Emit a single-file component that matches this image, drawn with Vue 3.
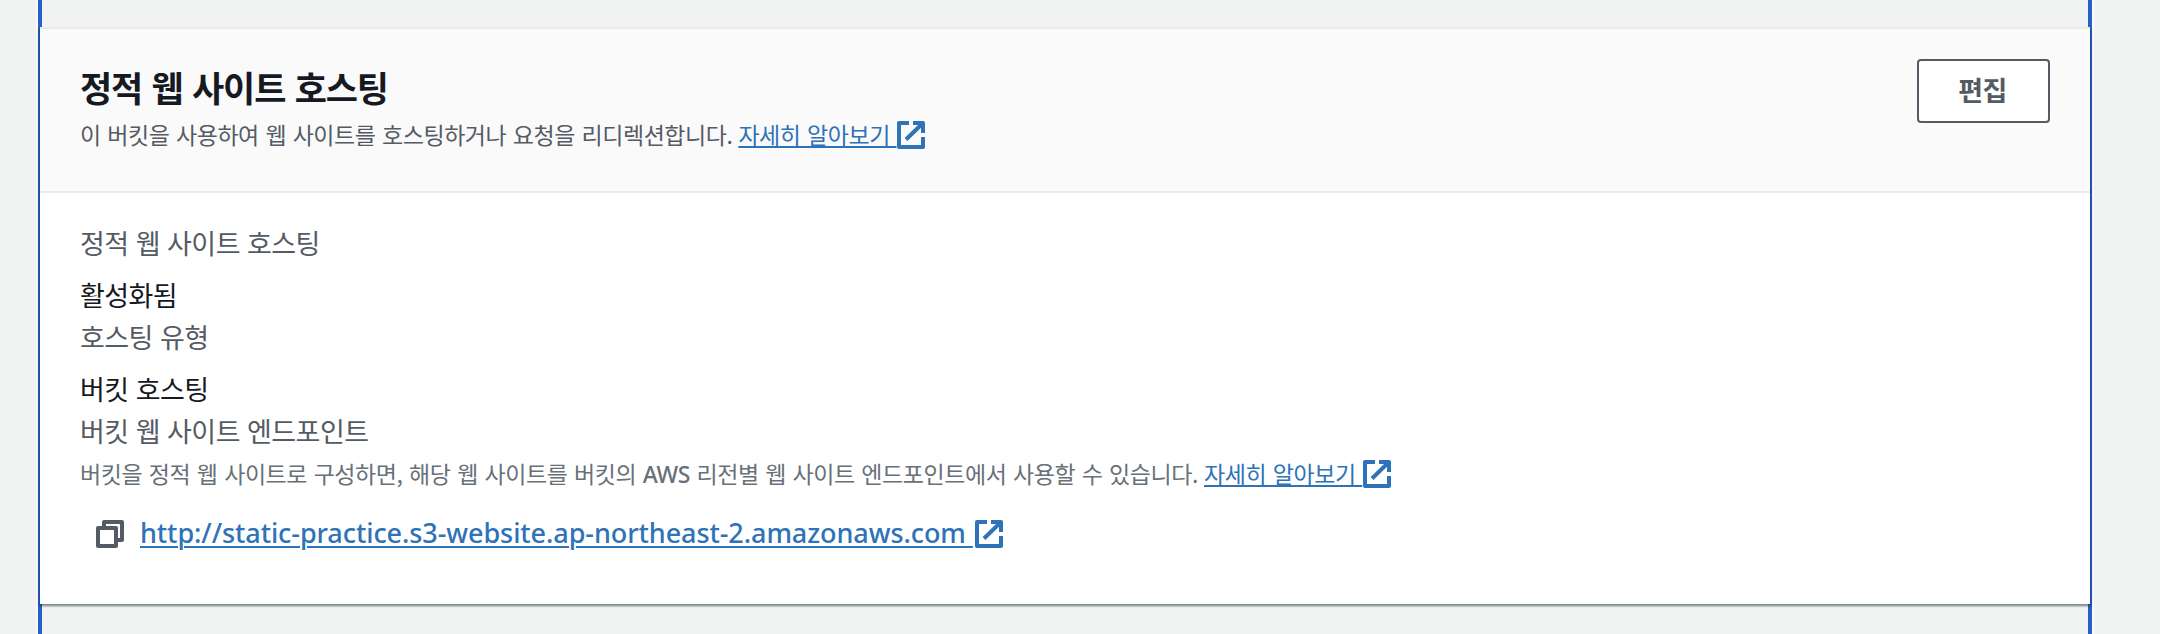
<script setup>
import { h } from 'vue'

const fields = [
  { label: '정적 웹 사이트 호스팅', value: '활성화됨' },
  { label: '호스팅 유형', value: '버킷 호스팅' },
]

const ExternalIcon = () =>
  h('svg', { viewBox: '0 0 28 28', width: 28, height: 28 }, [
    h('path', {
      d: 'M12 2H2v24h24V16M16 2h10v10M9 18.5L25 3',
      fill: 'none',
      stroke: 'currentColor',
      'stroke-width': 4,
      'stroke-linejoin': 'round',
    }),
  ])
</script>

<template>
  <div class="page">
    <div class="frame">
      <section class="card">
        <header class="card-header">
          <div>
            <h2>정적 웹 사이트 호스팅</h2>
            <p class="note intro">
              <span>이 버킷을 사용하여 웹 사이트를 호스팅하거나 요청을 리디렉션합니다.</span>
              <a class="link">자세히 알아보기&nbsp;</a>
              <ExternalIcon class="external" />
            </p>
          </div>
          <button type="button">편집</button>
        </header>
        <div class="card-body">
          <dl>
            <template v-for="field in fields" :key="field.label">
              <dt>{{ field.label }}</dt>
              <dd>{{ field.value }}</dd>
            </template>
            <dt>버킷 웹 사이트 엔드포인트</dt>
          </dl>
          <p class="note hint">
            <span>버킷을 정적 웹 사이트로 구성하면, 해당 웹 사이트를 버킷의 <span class="latin">AWS</span> 리전별 웹 사이트 엔드포인트에서 사용할 수 있습니다.</span>
            <a class="link">자세히 알아보기&nbsp;</a>
            <ExternalIcon class="external" />
          </p>
          <div class="endpoint">
            <svg class="copy" viewBox="0 0 28 28" width="28" height="28" fill="none" stroke="currentColor" stroke-width="4" stroke-linejoin="round">
              <rect x="2" y="8" width="18" height="18" />
              <path d="M8 6V2h18v18h-4" />
            </svg>
            <a class="link url">http://static-practice.s3-website.ap-northeast-2.amazonaws.com&nbsp;</a>
            <ExternalIcon class="external url-external" />
          </div>
        </div>
      </section>
    </div>
  </div>
</template>

<style>
body {
  margin: 0;
  background: #f1f3f3;
}
</style>

<style scoped>
.page {
  box-sizing: border-box;
  width: 2160px;
  height: 634px;
  padding-left: 36px;
  overflow: hidden;
  background: #f1f3f3;
  font-family: "Noto Sans CJK KR", "Noto Sans", sans-serif;
  color: #16191f;
}
.frame {
  box-sizing: border-box;
  width: 2058px;
  height: 634px;
  padding: 27px 0 0;
  background: linear-gradient(90deg, #fbfbfb 2px, #2860c8 2px 6px, #f1f3f3 6px 2052px, #2860c8 2052px 2056px, #fbfbfb 2056px);
}
.card {
  box-sizing: border-box;
  width: 2050px;
  height: 577px;
  margin-left: 4px;
  background: #fff;
  box-shadow: 0 2px 2px rgba(0, 28, 36, 0.3), 2px 2px 2px rgba(0, 28, 36, 0.15), -2px 2px 2px rgba(0, 28, 36, 0.15);
}
.card-header {
  box-sizing: border-box;
  display: flex;
  justify-content: space-between;
  align-items: flex-start;
  height: 166px;
  padding: 28px 40px 0;
  border-top: 2px solid #eaebeb;
  border-bottom: 2px solid #eaebeb;
  background: #fafafa;
}
h2 {
  margin: 0;
  font-size: 35px;
  line-height: 60px;
  font-weight: 700;
  letter-spacing: -1.1px;
  word-spacing: 2.5px;
}
.note {
  display: flex;
  align-items: center;
  height: 36px;
  margin: 0;
  font-size: 23px;
  line-height: 36px;
  letter-spacing: -0.46px;
  word-spacing: 1.9px;
  white-space: nowrap;
}
.intro {
  margin-top: -1px;
  color: #545b64;
}
.hint {
  margin-top: 3px;
  color: #687078;
  letter-spacing: -0.44px;
}
.latin {
  font-family: "Noto Sans", sans-serif;
  font-weight: 500;
  line-height: 1;
}
.link {
  margin-left: 6px;
  color: #2e72b8;
  text-decoration: underline;
  text-decoration-thickness: 2px;
  text-underline-offset: 2px;
}
.external {
  flex: none;
  margin: 2px 0 0 1px;
  color: #2e72b8;
}
button {
  box-sizing: border-box;
  width: 133px;
  height: 64px;
  margin-top: 2px;
  padding: 0 2px 2px 0;
  border: 2px solid #545b64;
  border-radius: 4px;
  background: #fff;
  color: #545b64;
  font: 700 27px/58px "Noto Sans CJK KR", sans-serif;
  letter-spacing: -0.5px;
}
.card-body {
  padding: 29px 40px 0;
}
dl {
  margin: 0;
  font-size: 27px;
  line-height: 42px;
  letter-spacing: -0.55px;
  word-spacing: 1.6px;
}
dt {
  color: #545b64;
}
dd {
  margin: 10px 0 0;
}
.endpoint {
  display: flex;
  align-items: center;
  height: 44px;
  margin-top: 21px;
  padding-left: 16px;
}
.copy {
  color: #545b64;
}
.url {
  margin-left: 16px;
  padding-bottom: 2px;
  font-family: "Noto Sans", sans-serif;
  font-size: 27px;
  font-weight: 500;
  line-height: 44px;
  letter-spacing: -0.075px;
  text-underline-offset: 3px;
}
.url-external {
  margin: 0 0 0 2px;
}
</style>
